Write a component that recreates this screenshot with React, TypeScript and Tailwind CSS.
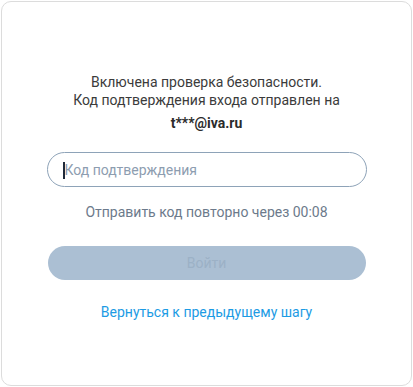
import { useState } from "react";

export default function App() {
  const [code, setCode] = useState("");

  return (
    <div
      className="w-[413px] h-[387px] bg-white p-px"
      style={{ fontFamily: "Roboto, 'Liberation Sans', sans-serif" }}
    >
      <div className="h-[385px] w-[411px] rounded-[10px] border border-[#dcdcdc] bg-white pt-[71px] text-center">
        <p className="text-[14px] leading-[18px] text-[#3b3b3b]">
          Включена проверка безопасности.
          <br />
          Код подтверждения входа отправлен на
        </p>
        <p className="mt-[5px] text-[14px] leading-[18px] font-bold text-[#2b2b2b]">
          t***@iva.ru
        </p>

        {/* Поле кода */}
        <div className="relative mx-auto mt-[20px] w-[320px]">
          <input
            value={code}
            onChange={(e) => setCode(e.target.value)}
            placeholder="Код подтверждения"
            className="h-[35px] w-full rounded-full border border-[#8ea3b8] bg-white pl-[17px] pr-4 text-[14px] text-[#2b2b2b] outline-none placeholder:text-[#8d9db0]"
          />
          {code === "" && (
            <span className="absolute left-[16px] top-[10px] h-[17px] w-[2px] bg-[#1f2a3a]" />
          )}
        </div>

        <p className="mt-[16px] text-[14px] leading-[18px] text-[#6c7a8b]">
          Отправить код повторно через 00:08
        </p>

        <button
          disabled
          className="mx-auto mt-[25px] block h-[34px] w-[318px] rounded-full bg-[#abbfd3] text-[14px] text-[#9cb1c6]"
        >
          Войти
        </button>

        <a
          href="#"
          className="mt-[23px] inline-block text-[14px] leading-[18px] text-[#1c9be4]"
        >
          Вернуться к предыдущему шагу
        </a>
      </div>
    </div>
  );
}
